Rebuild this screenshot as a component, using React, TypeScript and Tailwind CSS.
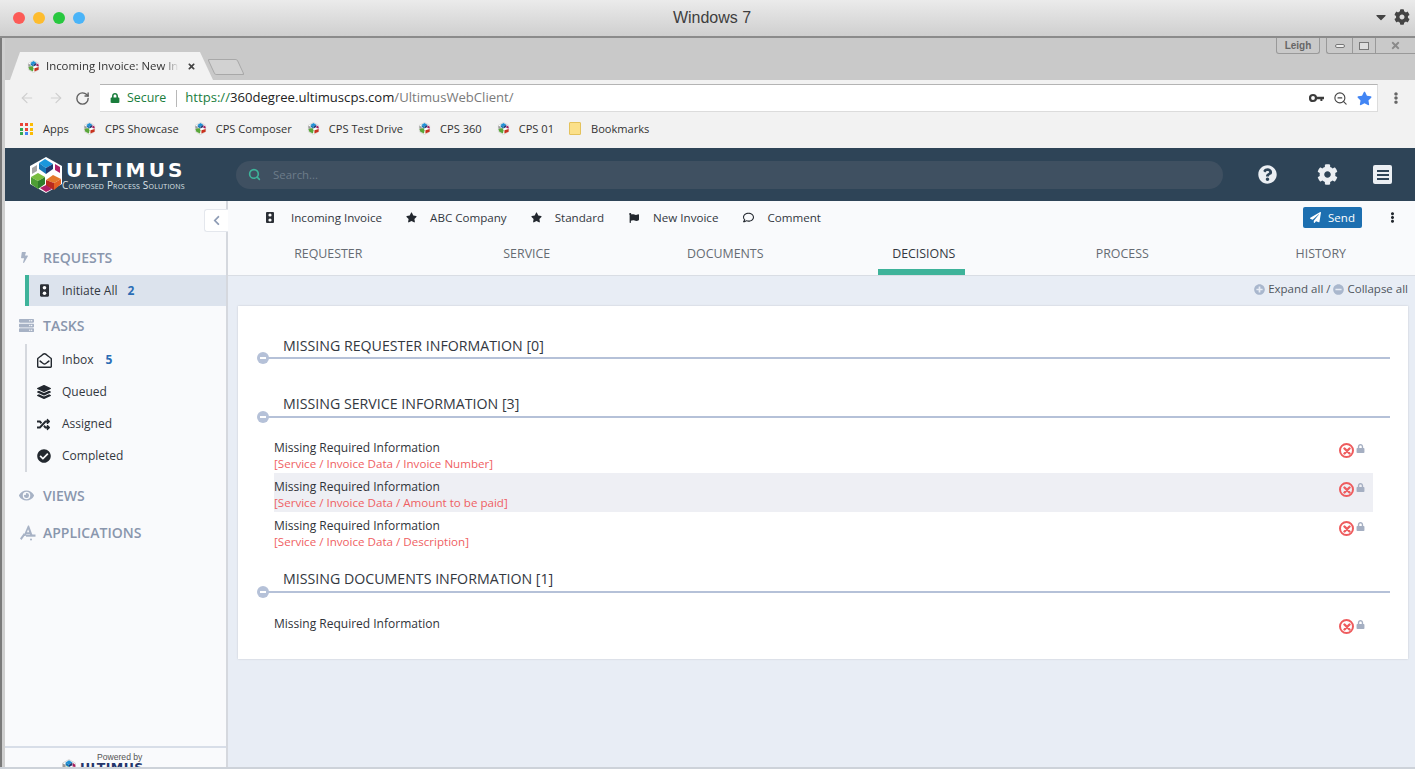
import React from "react";
import {
  FaBolt, FaServer, FaEye, FaRegEnvelopeOpen, FaLayerGroup, FaRandom, FaCheckCircle,
  FaQuestionCircle, FaCog, FaPaperPlane, FaEllipsisV, FaStar, FaFlag, FaRegComment, FaLock,
  FaPlusCircle, FaMinusCircle, FaChevronLeft, FaTimes, FaCaretDown,
} from "react-icons/fa";
import { FiSearch } from "react-icons/fi";
import { ArrowLeft, ArrowRight, RotateCw, ZoomOut } from "lucide-react";

function Cube({ size = 14 }: { size?: number }) {
  return (
    <svg width={size} height={size} viewBox="0 0 28 28" className="shrink-0">
      <polygon points="14,1 25,7 25,21 14,27 3,21 3,7" fill="#fff" stroke="#bbb" strokeWidth="1" />
      <polygon points="14,2 20,6 14,10 8,6" fill="#1e90d6" />
      <polygon points="8,6 14,10 14,14 8,11" fill="#1577b8" />
      <polygon points="20,6 14,10 14,14 20,11" fill="#20386f" />
      <polygon points="3,8 8,10 8,15 3,14" fill="#9a9a9a" />
      <polygon points="21,7 25,10 25,14 20,13" fill="#a81d5c" />
      <polygon points="3,15 12,13 14,18 13,25 5,21" fill="#5aa63a" />
      <polygon points="16,18 25,15 25,21 16,25" fill="#c8321e" />
    </svg>
  );
}

function Logo() {
  return (
    <svg width="38" height="38" viewBox="0 0 38 38" className="shrink-0">
      <polygon points="19,1 35,10 35,28 19,37 3,28 3,10" fill="#fff" />
      <polygon points="18,3 26,8 19,12 12,7" fill="#1b97dc" />
      <polygon points="26,8 19,12 19,18 26,13" fill="#20386f" />
      <polygon points="12,7 19,12 19,18 12,13" fill="#1577b8" />
      <polygon points="5,12 10,9 10,15 5,18" fill="#a6a6a6" />
      <polygon points="28,8 33,11 33,17 28,14" fill="#b01f66" />
      <polygon points="4,21 11,17 18,21 11,25" fill="#79bd3f" />
      <polygon points="4,21 11,25 11,33 4,28" fill="#4d9e35" />
      <polygon points="11,25 18,21 18,28 11,33" fill="#2f7d2b" />
      <polygon points="19,24 26,19 34,23 27,27" fill="#e4792b" />
      <polygon points="19,24 27,27 27,34 19,30" fill="#b92a1f" />
      <polygon points="27,27 34,23 34,28 27,34" fill="#e35f22" />
      <polygon points="13,32 19,29 25,33 19,36" fill="#b01f66" />
    </svg>
  );
}

function KeyIcon() {
  return (
    <svg width="15" height="10" viewBox="0 0 15 10" className="shrink-0">
      <circle cx="4" cy="5" r="3" fill="none" stroke="#3c3c3c" strokeWidth="2.2" />
      <path d="M7 3.8H15V6.2H13.4V8H11.4V6.2H7Z" fill="#3c3c3c" />
    </svg>
  );
}

function AppsIcon() {
  return (
    <svg width="17" height="17" viewBox="0 0 17 17" className="shrink-0">
      <path d="M9 1.5L4.5 12H6.6L7.4 10H10.8L11.6 12H13.8L10 1.5Z M8 8.3L9.1 5.2L10.2 8.3Z" fill="#a7b2c5" fillRule="evenodd" />
      <rect x="7" y="10.5" width="9.5" height="2.2" fill="#a7b2c5" />
      <path d="M5 9L1 14.5L2.5 16L6 11Z" fill="#a7b2c5" />
      <circle cx="12" cy="15.5" r="1" fill="#a7b2c5" />
    </svg>
  );
}

const bookmarks = ["CPS Showcase", "CPS Composer", "CPS Test Drive", "CPS 360", "CPS 01"];
const tabs = ["REQUESTER", "SERVICE", "DOCUMENTS", "DECISIONS", "PROCESS", "HISTORY"];

function Traffic({ className = "", w = 8, h = 11 }: { className?: string; w?: number; h?: number }) {
  return (
    <svg width={w} height={h} viewBox="0 0 8 11" className={className}>
      <rect width="8" height="11" rx="1" fill="#2b2f36" />
      <circle cx="4" cy="3" r="1.6" fill="#fff" />
      <circle cx="4" cy="8" r="1.6" fill="#fff" />
    </svg>
  );
}

function Row({ path, shaded }: { path?: string; shaded?: boolean }) {
  return (
    <div className={`h-[39px] flex justify-between pr-[8px] pt-[6px] ${shaded ? "bg-[#eeeff4]" : ""}`}>
      <div className="text-[12px] leading-[16px]">
        <div className="text-[#2f3339] font-medium">Missing Required Information</div>
        {path && <div className="text-[#ef5f63] text-[11.6px]">{path}</div>}
      </div>
      <div className="flex items-start gap-[2px] pt-[2px]">
        <span className="w-[15px] h-[15px] rounded-full border-[2.5px] border-[#ee5c5e] flex items-center justify-center mt-[1px]">
          <svg width="8" height="8" viewBox="0 0 8 8">
            <path d="M1.5 1.5L6.5 6.5M6.5 1.5L1.5 6.5" stroke="#ee5c5e" strokeWidth="2.4" strokeLinecap="round" />
          </svg>
        </span>
        <FaLock size={9} className="text-[#a5afc2] mt-[2px]" />
      </div>
    </div>
  );
}

function Heading({ title, className = "" }: { title: string; className?: string }) {
  return (
    <div className={`relative ml-[25px] mr-[18px] h-[23px] border-b-2 border-[#b5c1d8] pl-[20px] text-[14.2px] text-[#33383f] ${className}`}>
      {title}
      <span className="absolute left-[-6px] bottom-[-7px] w-[12px] h-[12px] rounded-full bg-[#b5c1d8] flex items-center justify-center">
        <span className="w-[6px] h-[2px] bg-white" />
      </span>
    </div>
  );
}

function SideHead({ icon, label, className = "" }: { icon: React.ReactNode; label: string; className?: string }) {
  return (
    <div className={`flex items-center text-[#8996ad] text-[14px] font-semibold pl-[14px] ${className}`}>
      <span className="w-[24px] flex items-center text-[#a7b2c5]">{icon}</span>
      {label}
    </div>
  );
}

function SideItem({ icon, label, badge }: { icon: React.ReactNode; label: string; badge?: string }) {
  return (
    <div className="h-[32px] flex items-center pl-[10px] text-[12px] text-[#33383f]">
      <span className="w-[25px] flex items-center text-[#23282f]">{icon}</span>
      {label}
      {badge && <span className="ml-[12px] font-bold text-[#2a6db5]">{badge}</span>}
    </div>
  );
}

export default function App() {
  return (
    <div className="w-[1415px] h-[769px] overflow-hidden flex flex-col bg-[#e8edf5] font-['Open_Sans','Noto_Sans',sans-serif]">
      {/* mac title */}
      <div className="h-[38px] shrink-0 relative flex items-center justify-center pl-[9px] border-b-2 border-[#8b8b8b] bg-gradient-to-b from-[#ebebeb] to-[#cfcfcf]">
        <div className="absolute left-[13px] top-[12px] flex gap-[8px]">
          <span className="w-[12px] h-[12px] rounded-full bg-[#fc5b57]" />
          <span className="w-[12px] h-[12px] rounded-full bg-[#fdbc2e]" />
          <span className="w-[12px] h-[12px] rounded-full bg-[#28c83f]" />
          <span className="w-[12px] h-[12px] rounded-full bg-[#4ab4f8]" />
        </div>
        <span className="text-[16px] text-[#3e3e3e] font-['Liberation_Sans',sans-serif]">Windows 7</span>
        <div className="absolute right-[5px] top-[9px] flex items-center gap-[5px] text-[#444]">
          <FaCaretDown size={16} />
          <FaCog size={16} />
        </div>
      </div>

      {/* windows frame */}
      <div className="flex-1 min-h-0 flex flex-col border-l-2 border-[#7a7a7a]">
        <div className="flex-1 min-h-0 flex flex-col border-l-[3px] border-[#cfcfcf]">
          <div className="h-[42px] shrink-0 bg-[#c9c9c9] flex justify-between">
            <div className="flex items-end pl-[5px]">
              <div className="w-[203px] h-[28px] bg-[#f2f2f2] flex items-center pl-[17px] gap-[6px] [clip-path:polygon(0_100%,10px_0,190px_0,100%_100%)]">
                <Cube size={13} />
                <span className="text-[11.4px] text-[#333] w-[133px] whitespace-nowrap [mask-image:linear-gradient(to_right,black_88%,transparent)]">Incoming Invoice: New In</span>
                <FaTimes size={9} className="text-[#444] ml-[2px]" />
              </div>
              <div className="w-[30px] h-[16px] mb-[5px] -ml-[2px] bg-[#d2d2d2] border border-[#a8a8a8] skew-x-[25deg] rounded-[2px]" />
            </div>
            <div className="flex items-start font-['Liberation_Sans',sans-serif] text-[10px] text-[#555]">
              <div className="w-[44px] h-[16px] border border-t-0 border-[#999] rounded-b-[3px] flex items-center justify-center font-bold text-[#666]">Leigh</div>
              <div className="ml-[6px] w-[89px] h-[16px] border-l border-b border-[#999] rounded-bl-[3px] flex items-center">
                <span className="w-[25px] flex justify-center"><span className="w-[10px] h-[4px] border border-[#777] rounded-[2px] bg-[#eee]" /></span>
                <span className="w-[24px] h-full border-x border-[#999] flex items-center justify-center"><span className="w-[10px] h-[8px] border border-[#777] bg-[#ddd]" /></span>
                <span className="flex-1 flex justify-center text-[#8a8a8a]"><FaTimes size={11} /></span>
              </div>
            </div>
          </div>

          <div className="h-[32px] shrink-0 bg-[#f2f2f2] flex items-start pt-[4px]">
            <div className="flex items-center gap-[13px] pl-[14px] w-[95px] h-[28px] text-[#cfcfcf]">
              <ArrowLeft size={16} strokeWidth={1.8} />
              <ArrowRight size={16} strokeWidth={1.8} />
              <RotateCw size={15} strokeWidth={2.2} className="text-[#606060] -ml-[2px]" />
            </div>
            <div className="w-[1278px] h-[28px] bg-white border-t border-[#b4b4b4] border-b border-b-[#dcdcdc] border-r border-r-[#dcdcdc] flex items-center pl-[10px] pr-[5px] text-[13.1px]">
              <FaLock size={10} className="text-[#1a7d3c]" />
              <span className="ml-[7px] text-[#1a7d3c] text-[12.4px]">Secure</span>
              <span className="ml-[10px] mr-[8px] w-px h-[17px] bg-[#b8b8b8]" />
              <span className="text-[#1a7d3c]">https://</span>
              <span className="text-[#222]">360degree.ultimuscps.com</span>
              <span className="text-[#7a7a7a]">/UltimusWebClient/</span>
              <span className="ml-auto flex items-center gap-[9px]">
                <KeyIcon />
                <ZoomOut size={15} strokeWidth={1.8} className="text-[#444]" />
                <FaStar size={15} className="text-[#4285f4]" />
              </span>
            </div>
            <span className="h-[28px] flex items-center ml-[12px]"><FaEllipsisV size={12} className="text-[#666]" /></span>
          </div>

          <div className="h-[36px] shrink-0 bg-[#f2f2f2] flex items-center pb-[2px] pl-[15px] text-[11.1px] text-[#333]">
            <span className="grid grid-cols-3 gap-[1.5px] w-[13px] mr-[10px]">
              {["#ea4335","#ea4335","#fbbc05","#34a853","#ea4335","#fbbc05","#34a853","#4285f4","#fbbc05"].map((c, i) => (
                <span key={i} className="w-[3px] h-[3px]" style={{ background: c }} />
              ))}
            </span>
            <span className="mr-[14px]">Apps</span>
            {bookmarks.map((b) => (
              <span key={b} className="flex items-center gap-[9px] mr-[15px]">
                <Cube size={13} />
                {b}
              </span>
            ))}
            <span className="flex items-center gap-[10px]">
              <span className="w-[12px] h-[13px] bg-[#fbe08a] border border-[#e4c25c] rounded-[1px]" />
              Bookmarks
            </span>
          </div>

          {/* app header */}
          <div className="h-[53px] shrink-0 bg-[#2e4457] flex items-center">
            <div className="w-[231px] pl-[22px] flex items-center">
              <Logo />
              <div className="flex flex-col items-start text-white -ml-[3px]">
                <span className="ml-[4px] text-[20px] font-bold tracking-[3.2px] font-['DejaVu_Sans',sans-serif] leading-[19px] mt-[1px]">ULTIMUS</span>
                <span className="text-[10px] leading-[10px] [font-variant:small-caps] tracking-[0.2px] text-[#dfe5ea] whitespace-nowrap">Composed Process Solutions</span>
              </div>
            </div>
            <div className="w-[987px] h-[28px] rounded-full bg-[#3f5061] flex items-center pl-[12px]">
              <FiSearch size={13} strokeWidth={3} className="text-[#3eb39a]" />
              <span className="ml-[12px] text-[11.4px] text-[#6d7c8a]">Search...</span>
            </div>
            <div className="flex items-center ml-[35px] text-[#ebeff3]">
              <FaQuestionCircle size={19} />
              <FaCog size={21} className="ml-[40px]" />
              <span className="ml-[35px] w-[19px] h-[19px] bg-[#ebeff3] rounded-[2px] flex flex-col items-center justify-center gap-[2px]">
                <span className="w-[12px] h-[2px] bg-[#2e4457]" />
                <span className="w-[12px] h-[2px] bg-[#2e4457]" />
                <span className="w-[12px] h-[2px] bg-[#2e4457]" />
              </span>
            </div>
          </div>

          <div className="flex-1 min-h-0 flex">
            {/* sidebar */}
            <aside className="relative w-[223px] shrink-0 bg-[#f9fafc] border-r-2 border-[#d5d8de] flex flex-col">
              <div className="absolute right-[-2px] top-[8px] w-[24px] h-[23px] bg-white border border-r-0 border-[#e4e7ed] rounded-l-[3px] flex items-center justify-center text-[#8e9cb5]">
                <FaChevronLeft size={11} />
              </div>
              <div className="flex-1">
                <SideHead icon={<FaBolt size={11} />} label="REQUESTS" className="mt-[46px] h-[20px]" />
                <div className="mt-[8px] ml-[20px] h-[31px] bg-[#dce3ed] border-l-4 border-[#3eb39a] flex items-center pl-[11px] text-[12px] text-[#33383f]">
                  <span className="w-[22px]"><Traffic w={9} h={13} /></span>
                  Initiate All
                  <span className="ml-[10px] font-bold text-[#2a6db5]">2</span>
                </div>
                <SideHead icon={<FaServer size={15} />} label="TASKS" className="mt-[9px] h-[20px]" />
                <div className="ml-[20px] mt-[9px] border-l-2 border-[#d5d8de] h-[128px]">
                  <SideItem icon={<FaRegEnvelopeOpen size={15} />} label="Inbox" badge="5" />
                  <SideItem icon={<FaLayerGroup size={14} />} label="Queued" />
                  <SideItem icon={<FaRandom size={13} />} label="Assigned" />
                  <SideItem icon={<FaCheckCircle size={14} />} label="Completed" />
                </div>
                <SideHead icon={<FaEye size={15} />} label="VIEWS" className="mt-[13px] h-[20px]" />
                <SideHead icon={<AppsIcon />} label="APPLICATIONS" className="mt-[17px] h-[20px]" />
              </div>
              <div className="h-[21px] shrink-0 border-t-2 border-[#d8dee8] overflow-hidden flex flex-col items-start">
                <span className="text-[8.6px] leading-[11px] pt-[4px] ml-[92px] h-[14px] text-[#555] font-['Liberation_Sans',sans-serif] whitespace-nowrap">Powered by</span>
                <div className="flex items-start gap-[3px] ml-[56px] -mt-[3px] h-[8px] overflow-hidden">
                  <Cube size={16} />
                  <span className="text-[12.5px] font-bold tracking-[0.4px] text-[#23356b] font-['DejaVu_Sans',sans-serif] leading-[16px] mt-[1px]">ULTIMUS</span>
                </div>
              </div>
            </aside>

            {/* main */}
            <main className="flex-1 min-w-0 flex flex-col overflow-hidden">
              <div className="h-[75px] shrink-0 bg-[#f9fafc] border-b border-[#d9dde4] flex flex-col">
                <div className="h-[35px] shrink-0 flex items-center pb-[2px] text-[11.6px] text-[#33383f]">
                  <Traffic className="ml-[38px]" />
                  <span className="ml-[17px]">Incoming Invoice</span>
                  <FaStar size={11} className="ml-[24px] text-[#23282f]" />
                  <span className="ml-[13px]">ABC Company</span>
                  <FaStar size={11} className="ml-[24px] text-[#23282f]" />
                  <span className="ml-[13px]">Standard</span>
                  <FaFlag size={10} className="ml-[25px] text-[#23282f]" />
                  <span className="ml-[14px]">New Invoice</span>
                  <FaRegComment size={11} className="ml-[25px] text-[#23282f]" />
                  <span className="ml-[13px]">Comment</span>
                  <span className="ml-auto flex items-center">
                    <span className="w-[59px] h-[21px] rounded-[2px] bg-[#1d6fb0] text-white flex items-center justify-center gap-[7px] text-[11.5px]">
                      <FaPaperPlane size={11} />
                      Send
                    </span>
                    <FaEllipsisV size={11} className="ml-[25px] mr-[17px] text-[#23282f]" />
                  </span>
                </div>
                <div className="w-[1191px] flex-1 grid grid-cols-6 ml-[1px]">
                  {tabs.map((t) => (
                    <div key={t} className="relative flex justify-center pt-[9px] text-[12.4px] font-medium">
                      <span className={t === "DECISIONS" ? "text-[#33383f]" : "text-[#666b72]"}>{t}</span>
                      {t === "DECISIONS" && <span className="absolute bottom-0 left-[calc(50%-46px)] w-[87px] h-[6px] bg-[#3eb39a]" />}
                    </div>
                  ))}
                </div>
              </div>

              <div className="h-[30px] shrink-0 flex items-center justify-end pb-[4px] pr-[7px] text-[11.5px] text-[#4f555d]">
                <FaPlusCircle size={11} className="text-[#a9b7cd] mr-[3px]" />
                Expand all /
                <FaMinusCircle size={11} className="text-[#a9b7cd] ml-[3px] mr-[3px]" />
                Collapse all
              </div>

              <div className="ml-[10px] mr-[7px] bg-white shadow-[0_0_2px_rgba(0,0,0,0.15)] pt-[30px] pb-[10px]">
                <Heading title="MISSING REQUESTER INFORMATION [0]" className="leading-[20px]" />
                <Heading title="MISSING SERVICE INFORMATION [3]" className="mt-[36px] leading-[18px]" />
                <div className="ml-[36px] mr-[35px] mt-[16px]">
                  <Row path="[Service / Invoice Data / Invoice Number]" />
                  <Row path="[Service / Invoice Data / Amount to be paid]" shaded />
                  <Row path="[Service / Invoice Data / Description]" />
                </div>
                <Heading title="MISSING DOCUMENTS INFORMATION [1]" className="mt-[19px] leading-[18px]" />
                <div className="ml-[36px] mr-[35px] mt-[17px]">
                  <Row />
                </div>
              </div>
            </main>
          </div>
        </div>
      </div>
      <div className="h-[2px] shrink-0 bg-[#cdd2d9]" />
    </div>
  );
}
